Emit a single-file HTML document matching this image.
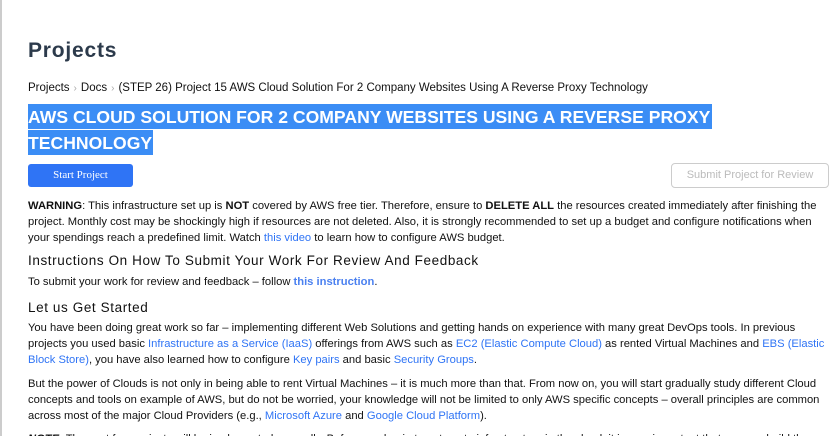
<!DOCTYPE html>
<html><head><meta charset="utf-8"><style>
html,body{margin:0;padding:0;background:#fff;width:836px;height:436px;overflow:hidden}
body{font-family:"Liberation Sans",Arial,sans-serif;color:#111;position:relative;border-left:2px solid #ccc;box-sizing:border-box}
.a{position:absolute;left:26px;white-space:nowrap}
.t{font-size:11.2px;line-height:16px}
a{color:#2f74f5;text-decoration:none}
h1{margin:0;font-size:21px;font-weight:bold;color:#2c3a4b;letter-spacing:.8px}
.h{font-size:13.5px;letter-spacing:.6px;color:#111}
.chev{color:#aaa;font-size:10px;margin:0 4px}
</style></head><body>
<div class="a" style="top:39px"><h1>Projects</h1></div>
<div class="a t" style="top:80px;font-size:11.5px">Projects<span class="chev">&#8250;</span>Docs<span class="chev">&#8250;</span>(STEP 26) Project 15 AWS Cloud Solution For 2 Company Websites Using A Reverse Proxy Technology</div>
<div class="a" style="top:104px;font-weight:bold;font-size:17.6px;line-height:26px;color:#fff">
<div style="background:#3b8df5;display:inline-block;padding-right:2px;height:25px">AWS CLOUD SOLUTION FOR 2 COMPANY WEBSITES USING A REVERSE PROXY</div><br>
<div style="background:#3b8df5;display:inline-block;padding-right:1px;height:25px">TECHNOLOGY</div></div>
<div style="position:absolute;left:26px;top:164px;width:105px;height:23px;background:#2f74f5;border-radius:3px;color:#fff;font-family:'Liberation Serif',serif;font-size:11px;line-height:23px;text-align:center">Start Project</div>
<div style="position:absolute;left:669px;top:163px;width:156px;height:23px;border:1px solid #ccc;border-radius:4px;color:#bbb;font-size:11px;line-height:23px;text-align:center">Submit Project for Review</div>
<div class="a t" style="top:198px"><b>WARNING</b>: This infrastructure set up is <b>NOT</b> covered by AWS free tier. Therefore, ensure to <b>DELETE ALL</b> the resources created immediately after finishing the<br>project. Monthly cost may be shockingly high if resources are not deleted. Also, it is strongly recommended to set up a budget and configure notifications when<br>your spendings reach a predefined limit. Watch <a>this video</a> to learn how to configure AWS budget.</div>
<div class="a h" style="top:253px">Instructions On How To Submit Your Work For Review And Feedback</div>
<div class="a t" style="top:274px">To submit your work for review and feedback – follow <a style="font-weight:bold;color:#4a80f0">this instruction</a>.</div>
<div class="a h" style="top:300px">Let us Get Started</div>
<div class="a t" style="top:320px">You have been doing great work so far – implementing different Web Solutions and getting hands on experience with many great DevOps tools. In previous<br>projects you used basic <a>Infrastructure as a Service (IaaS)</a> offerings from AWS such as <a>EC2 (Elastic Compute Cloud)</a> as rented Virtual Machines and <a>EBS (Elastic</a><br><a>Block Store)</a>, you have also learned how to configure <a>Key pairs</a> and basic <a>Security Groups</a>.</div>
<div class="a t" style="top:376px">But the power of Clouds is not only in being able to rent Virtual Machines – it is much more than that. From now on, you will start gradually study different Cloud<br>concepts and tools on example of AWS, but do not be worried, your knowledge will not be limited to only AWS specific concepts – overall principles are common<br>across most of the major Cloud Providers (e.g., <a>Microsoft Azure</a> and <a>Google Cloud Platform</a>).</div>
<div class="a t" style="top:431px"><b><i>NOTE</i>:</b> The next few projects will be implemented manually. Before you begin to automate infrastructure in the cloud, it is very important that you can build the</div>
</body></html>
